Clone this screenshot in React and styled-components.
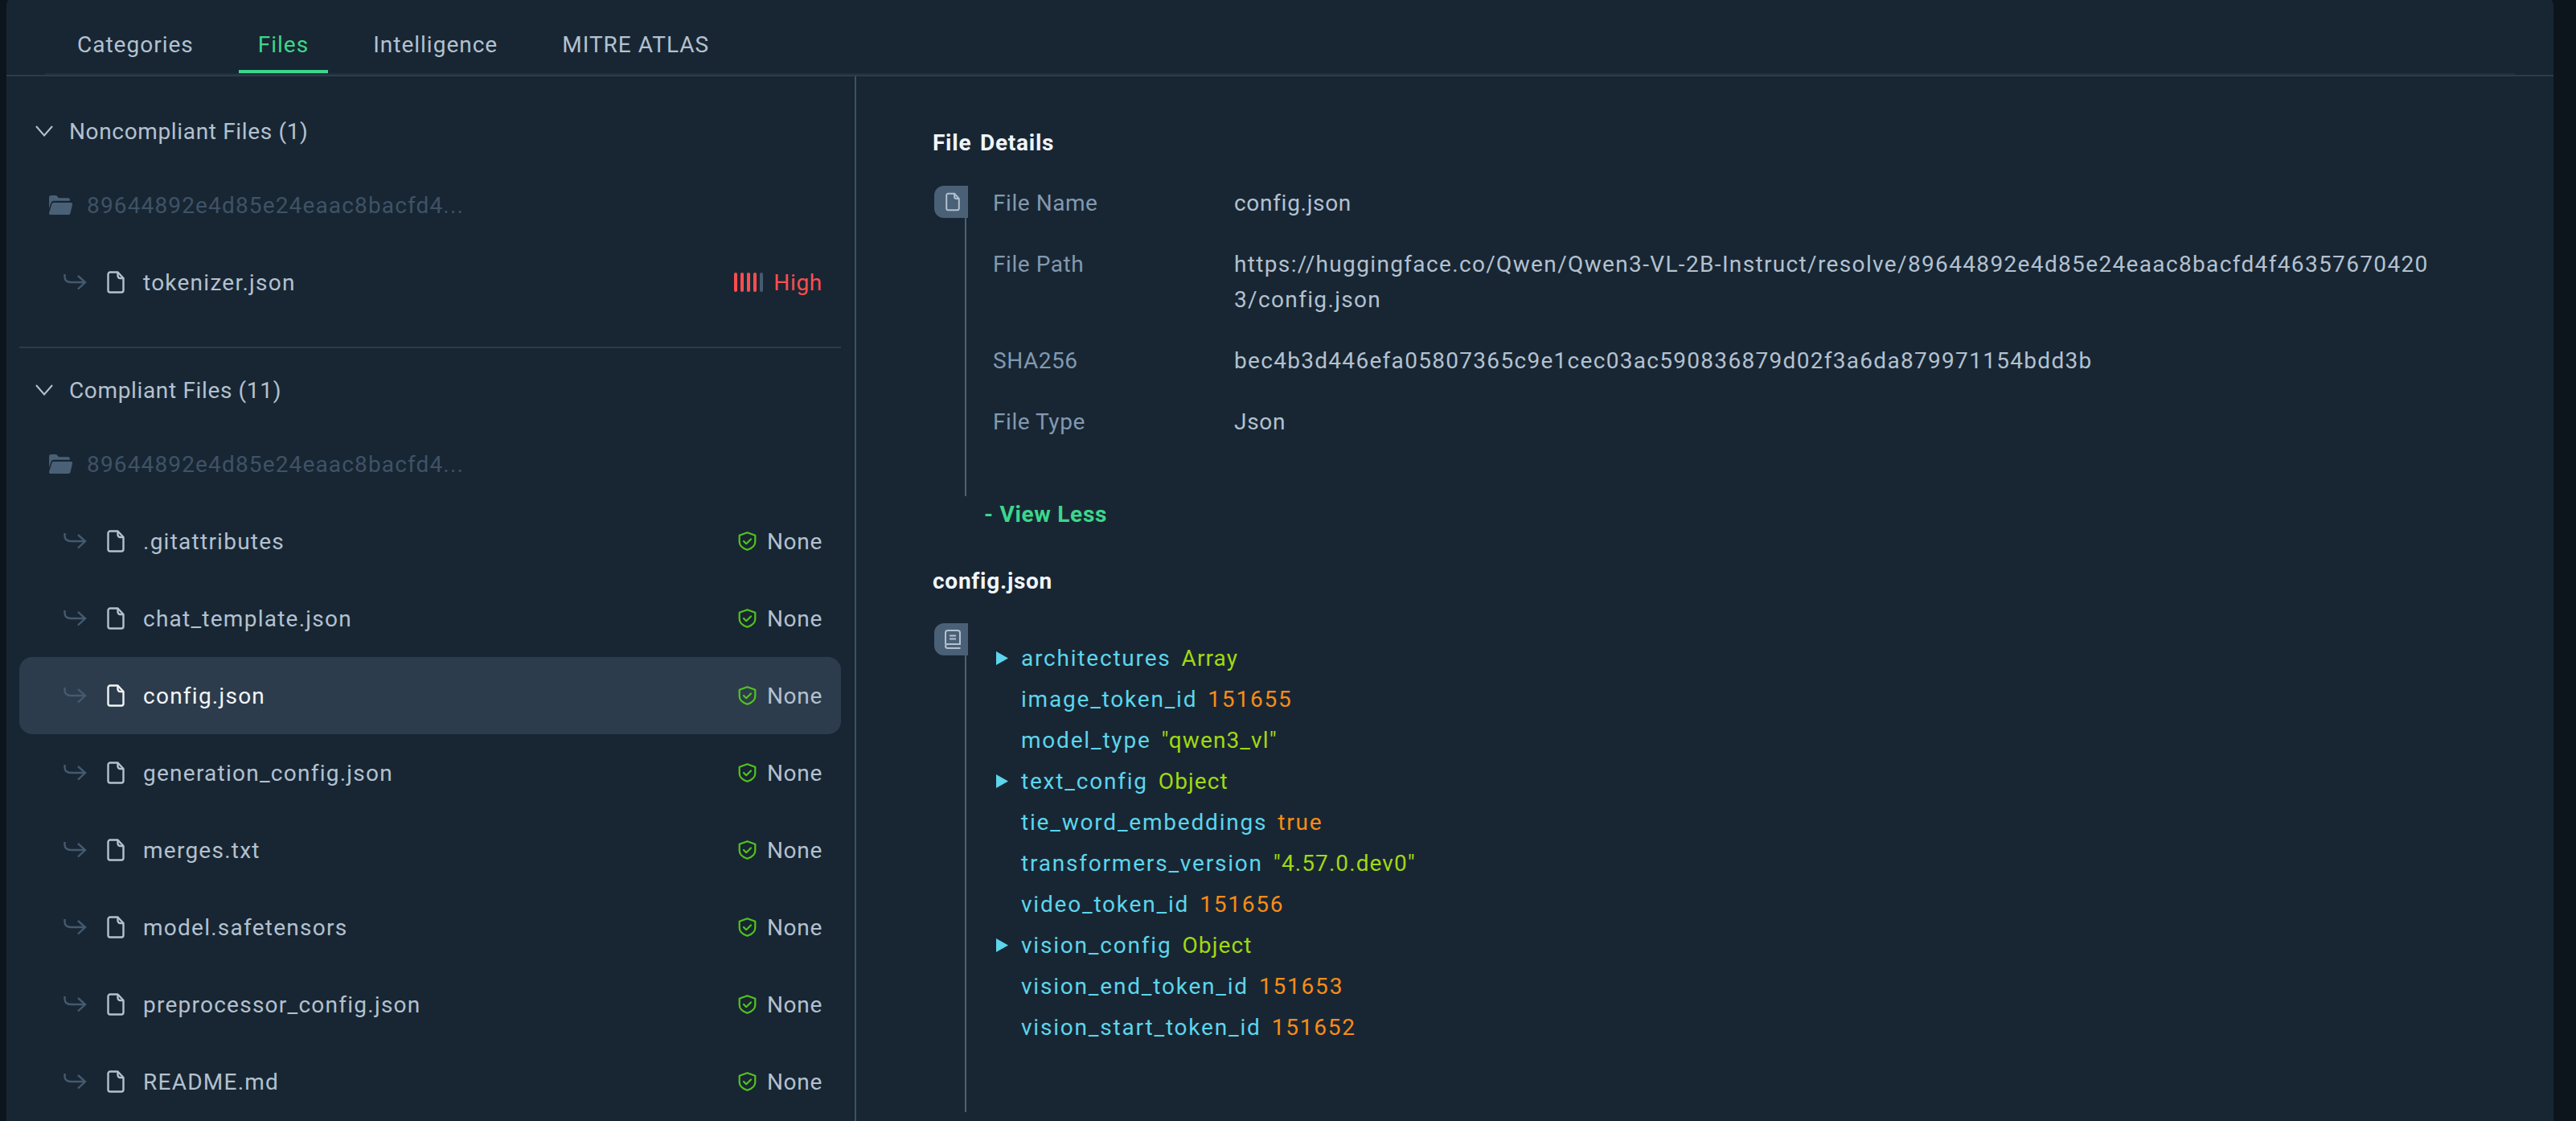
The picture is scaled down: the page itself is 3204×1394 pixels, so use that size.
import { Fragment } from 'react';
import styled, { createGlobalStyle } from 'styled-components';

const GlobalStyle = createGlobalStyle`
  html, body {
    margin: 0;
    height: 100%;
    background: #0c151c;
  }
  body {
    font-family: Roboto, "Noto Sans", sans-serif;
    font-size: 28px;
    letter-spacing: 0.7px;
    color: #b3c1d0;
    overflow: hidden;
  }
`;

const Page = styled.div`
  height: 1394px;
  overflow: hidden;
`;

const Panel = styled.div`
  margin: -8px 28px 0 8px;
  height: 1402px;
  background: #182633;
  border-radius: 16px 16px 0 0;
  display: flex;
  flex-direction: column;
`;

const Header = styled.div`
  flex: none;
  height: 103px;
  box-sizing: border-box;
  border-bottom: 2px solid #2d3c4c;
  padding: 0 48px;
`;

const TabList = styled.nav`
  height: 101px;
  box-sizing: border-box;
  padding: 8px 0 0 16px;
  border-bottom: 2px solid #202f3d;
  display: flex;
  gap: 32px;
`;

const Tab = styled.div`
  height: 91px;
  box-sizing: border-box;
  padding: 24px 24px 0;
  display: flex;
  align-items: center;
  letter-spacing: 1px;
  color: ${(props) => (props.$active ? '#3dd68c' : '#b3c1d0')};
  border-bottom: 4px solid ${(props) => (props.$active ? '#3dd68c' : 'transparent')};
`;

const Columns = styled.div`
  flex: 1;
  display: flex;
  min-height: 0;
`;

const Sidebar = styled.aside`
  flex: none;
  width: 1057px;
  box-sizing: border-box;
  padding: 44px 17px 0 16px;
  border-right: 2px solid #3d5166;
`;

const GroupTitle = styled.div`
  height: 48px;
  display: flex;
  align-items: center;
  gap: 20px;
  padding-left: 20px;
  margin-bottom: 20px;
  letter-spacing: 0.65px;
`;

const FolderRow = styled.div`
  height: 96px;
  display: flex;
  align-items: center;
  gap: 18px;
  padding-left: 36px;
  letter-spacing: 1.15px;
  color: #3f5266;
`;

const FileRow = styled.div`
  height: 96px;
  display: flex;
  align-items: center;
  padding: 0 23px 0 55px;
  border-radius: 16px;
  background: ${(props) => (props.$selected ? '#2d3c4c' : 'transparent')};
  color: ${(props) => (props.$selected ? '#f1f5f9' : '#b3c1d0')};
`;

const FileGlyph = styled.span`
  display: flex;
  margin-left: 25px;
`;

const FileName = styled.span`
  margin-left: 23px;
  letter-spacing: 1.25px;
`;

const GroupDivider = styled.div`
  height: 2px;
  background: #2d3c4c;
  margin: 32px 0 28px;
`;

const Severity = styled.div`
  margin-left: auto;
  display: flex;
  align-items: center;
  gap: 13px;
  color: ${(props) => props.$color};
`;

const Bars = styled.div`
  display: flex;
  gap: 4px;
`;

const Bar = styled.i`
  width: 4px;
  height: 24px;
  border-radius: 2px;
  background: ${(props) => (props.$on ? '#ff4d4f' : '#475b70')};
`;

const Details = styled.main`
  flex: 1;
  padding: 63px 0 0 95px;
`;

const SectionTitle = styled.h2`
  margin: 0 0 ${(props) => props.$gap}px;
  height: 40px;
  line-height: 40px;
  font-size: 28px;
  font-weight: 700;
  letter-spacing: 0.75px;
  word-spacing: 3px;
  color: #f1f5f9;
`;

const Rail = styled.div`
  position: relative;
  margin-left: 40px;
  border-left: 2px solid #4a6076;
`;

const RailIcon = styled.div`
  position: absolute;
  left: -40px;
  top: 0;
  width: 42px;
  height: 40px;
  background: #4a6076;
  border-radius: 12px 0 0 12px;
  display: flex;
  align-items: center;
  justify-content: center;
  padding-left: 4px;
  box-sizing: border-box;
`;

const InfoGrid = styled.dl`
  margin: 0;
  height: 386px;
  padding-left: 33px;
  box-sizing: border-box;
  display: grid;
  grid-template-columns: 300px 1500px;
  grid-auto-rows: min-content;
  row-gap: 32px;
  line-height: 44px;
`;

const InfoLabel = styled.dt`
  color: #8299b0;
  letter-spacing: 0.55px;
`;

const InfoValue = styled.dd`
  margin: 0;
  color: #b3c1d0;
  word-break: break-all;
  letter-spacing: ${(props) => props.$spacing}px;
`;

const ViewLess = styled.a`
  display: block;
  margin: 1px 0 41px 64px;
  line-height: 44px;
  font-weight: 700;
  color: #3dd68c;
`;

const JsonTree = styled.div`
  height: 608px;
  box-sizing: border-box;
  padding: 18px 0 0 37px;
`;

const JsonRow = styled.div`
  height: 51px;
  display: flex;
  align-items: center;
  gap: 16px;
`;

const Caret = styled.span`
  width: 15px;
  height: 17px;
  background: ${(props) => (props.$open ? '#5dd5ec' : 'transparent')};
  clip-path: polygon(0 0, 100% 50%, 0 100%);
`;

const JsonKey = styled.span`
  color: #5dd5ec;
  letter-spacing: 1.8px;
`;

const JsonValue = styled.span`
  margin-left: -3px;
  letter-spacing: ${(props) => (props.$kind === 'number' ? 1.8 : 1.1)}px;
  color: ${(props) => (props.$kind === 'number' ? '#fa8c16' : '#a0d911')};
`;

const Chevron = () => (
  <svg width="22" height="14" viewBox="0 0 22 14" fill="none" stroke="#b3c1d0" strokeWidth="2">
    <path d="M1 1l10 11.5L21 1" />
  </svg>
);

const FolderIcon = () => (
  <svg width="30" height="24" viewBox="0 0 29 23" fill="#4a6076">
    <path d="M1 2.500A2.500 2.500 0 0 1 3.500 0h6.200l3 3H24a2 2 0 0 1 2 2v1.500H6.500A3.500 3.500 0 0 0 3.200 9L1 15.500z" />
    <path d="M6.500 8.500H27a2 2 0 0 1 2 2.400l-2.400 10.400a2.200 2.200 0 0 1-2.200 1.700H2.500A1.500 1.500 0 0 1 1 21l3.300-10.800a2.300 2.300 0 0 1 2.200-1.700z" />
  </svg>
);

const ReturnArrow = () => (
  <svg width="29" height="20" viewBox="0 0 29 20" fill="none" stroke="#435a70" strokeWidth="2.4">
    <path d="M1.500 0v3.500C1.500 7.500 4.500 10 9 10h18M18 2l9 8-9 8.500" />
  </svg>
);

const FileIcon = ({ width = 22, height = 28, color = '#b3c1d0' }) => (
  <svg width={width} height={height} viewBox="0 0 22 28" fill="none" stroke={color} strokeWidth="2.4" strokeLinejoin="round">
    <path d="M4 1.500h9.500l7 7.500v15a2.500 2.500 0 0 1-2.500 2.500H4A2.500 2.500 0 0 1 1.500 24V4A2.500 2.500 0 0 1 4 1.500z" />
    <path d="M13.500 1.500V6a3 3 0 0 0 3 3h4" />
  </svg>
);

const BookIcon = () => (
  <svg width="20" height="24" viewBox="0 0 20 24" fill="none" stroke="#b3c1d0" strokeWidth="2">
    <path d="M1 18V4a3 3 0 0 1 3-3h12a3 3 0 0 1 3 3v14H3.500a2.500 2.500 0 0 0 0 5H19.500" />
    <path d="M6 7.500h8M6 11.500h8" />
  </svg>
);

const ShieldIcon = () => (
  <svg width="23" height="24" viewBox="0 0 23 24" fill="none" stroke="#52c41a" strokeWidth="2.2" strokeLinejoin="round">
    <path d="M11.500 1.200l9.800 3.600v8c0 4.800-4.300 8.200-9.800 10-5.500-1.800-9.800-5.200-9.800-10v-8z" />
    <path d="M7 12l3.200 3.200L16 9.500" strokeLinecap="round" />
  </svg>
);

const FileEntry = ({ name, selected }) => (
  <FileRow $selected={selected}>
    <ReturnArrow />
    <FileGlyph>
      <FileIcon color={selected ? '#f1f5f9' : '#b3c1d0'} />
    </FileGlyph>
    <FileName>{name}</FileName>
    <Severity $color="#b3c1d0">
      <ShieldIcon />
      None
    </Severity>
  </FileRow>
);

const compliantFiles = [
  '.gitattributes',
  'chat_template.json',
  'config.json',
  'generation_config.json',
  'merges.txt',
  'model.safetensors',
  'preprocessor_config.json',
  'README.md',
];

const info = [
  ['File Name', 'config.json', 0.7],
  [
    'File Path',
    'https://huggingface.co/Qwen/Qwen3-VL-2B-Instruct/resolve/89644892e4d85e24eaac8bacfd4f463576704203/config.json',
    1.35,
  ],
  ['SHA256', 'bec4b3d446efa05807365c9e1cec03ac590836879d02f3a6da879971154bdd3b', 1.3],
  ['File Type', 'Json', 0.7],
];

const json = [
  ['architectures', 'Array', 'text', true],
  ['image_token_id', '151655', 'number'],
  ['model_type', '"qwen3_vl"', 'text'],
  ['text_config', 'Object', 'text', true],
  ['tie_word_embeddings', 'true', 'number'],
  ['transformers_version', '"4.57.0.dev0"', 'text'],
  ['video_token_id', '151656', 'number'],
  ['vision_config', 'Object', 'text', true],
  ['vision_end_token_id', '151653', 'number'],
  ['vision_start_token_id', '151652', 'number'],
];

export default function App() {
  return (
    <Page>
      <GlobalStyle />
      <Panel>
        <Header>
          <TabList>
            <Tab>Categories</Tab>
            <Tab $active>Files</Tab>
            <Tab>Intelligence</Tab>
            <Tab>MITRE ATLAS</Tab>
          </TabList>
        </Header>
        <Columns>
          <Sidebar>
            <GroupTitle>
              <Chevron />
              Noncompliant Files (1)
            </GroupTitle>
            <FolderRow>
              <FolderIcon />
              89644892e4d85e24eaac8bacfd4...
            </FolderRow>
            <FileRow>
              <ReturnArrow />
              <FileGlyph>
                <FileIcon />
              </FileGlyph>
              <FileName>tokenizer.json</FileName>
              <Severity $color="#ff4d4f">
                <Bars>
                  <Bar $on />
                  <Bar $on />
                  <Bar $on />
                  <Bar $on />
                  <Bar />
                </Bars>
                High
              </Severity>
            </FileRow>
            <GroupDivider />
            <GroupTitle>
              <Chevron />
              Compliant Files (11)
            </GroupTitle>
            <FolderRow>
              <FolderIcon />
              89644892e4d85e24eaac8bacfd4...
            </FolderRow>
            {compliantFiles.map((name) => (
              <FileEntry key={name} name={name} selected={name === 'config.json'} />
            ))}
          </Sidebar>
          <Details>
            <SectionTitle $gap={33}>File Details</SectionTitle>
            <Rail>
              <RailIcon>
                <FileIcon width={18} height={24} />
              </RailIcon>
              <InfoGrid>
                {info.map(([label, value, spacing]) => (
                  <Fragment key={label}>
                    <InfoLabel>{label}</InfoLabel>
                    <InfoValue $spacing={spacing}>{value}</InfoValue>
                  </Fragment>
                ))}
              </InfoGrid>
            </Rail>
            <ViewLess>- View Less</ViewLess>
            <SectionTitle $gap={32}>config.json</SectionTitle>
            <Rail>
              <RailIcon>
                <BookIcon />
              </RailIcon>
              <JsonTree>
                {json.map(([key, value, kind, open]) => (
                  <JsonRow key={key}>
                    <Caret $open={open} />
                    <JsonKey>{key}</JsonKey>
                    <JsonValue $kind={kind}>{value}</JsonValue>
                  </JsonRow>
                ))}
              </JsonTree>
            </Rail>
          </Details>
        </Columns>
      </Panel>
    </Page>
  );
}
